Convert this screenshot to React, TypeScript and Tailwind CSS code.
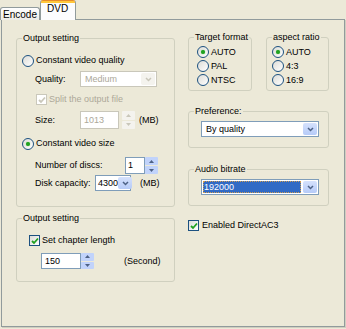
import React from "react";

const font = "font-['Liberation_Sans',Arial,sans-serif] text-[9px] leading-[11px] text-black";

function Radio({ checked }: { checked?: boolean }) {
  return (
    <span className="relative flex h-[12px] w-[12px] shrink-0 items-center justify-center rounded-full border border-[#1c5180] bg-gradient-to-br from-[#dcdcd7] to-white">
      {checked && <span className="h-[4px] w-[4px] rounded-full bg-[#21a121] shadow-[0_0_1px_#4fc94f]" />}
    </span>
  );
}

function Check({ checked, disabled }: { checked?: boolean; disabled?: boolean }) {
  return (
    <span
      className={
        disabled
          ? "flex h-[11px] w-[11px] shrink-0 items-center justify-center border border-[#cac8bb] bg-white"
          : "flex h-[11px] w-[11px] shrink-0 items-center justify-center border border-[#1c5180] bg-gradient-to-br from-[#dcdcd7] to-white"
      }
    >
      {checked && (
        <svg width="8" height="8" viewBox="0 0 8 8">
          <path d="M1 4 L3 6 L7 1.5" fill="none" stroke={disabled ? "#cac8bb" : "#21a121"} strokeWidth="1.8" />
        </svg>
      )}
    </span>
  );
}

function Spin({ disabled, h = 18 }: { disabled?: boolean; h?: number }) {
  const bg = disabled ? "bg-[#f4f3ee]" : "bg-[#c1d3fb]";
  const fill = disabled ? "#c9c7ba" : "#4d6185";
  return (
    <span className="flex w-[13px] shrink-0 flex-col gap-[1px]" style={{ height: h }}>
      <span className={`flex flex-1 items-center justify-center rounded-[1px] ${bg}`}>
        <svg width="5" height="3" viewBox="0 0 5 3">
          <path d="M0 3 L2.5 0 L5 3 Z" fill={fill} />
        </svg>
      </span>
      <span className={`flex flex-1 items-center justify-center rounded-[1px] ${bg}`}>
        <svg width="5" height="3" viewBox="0 0 5 3">
          <path d="M0 0 L2.5 3 L5 0 Z" fill={fill} />
        </svg>
      </span>
    </span>
  );
}

function DropBtn({ disabled }: { disabled?: boolean }) {
  return (
    <span
      className={
        disabled
          ? "flex h-full w-[14px] shrink-0 items-center justify-center rounded-[2px] bg-[#f4f3ee]"
          : "flex h-full w-[14px] shrink-0 items-center justify-center rounded-[2px] bg-gradient-to-b from-[#d5e1fc] to-[#b6cbf8]"
      }
    >
      <svg width="7" height="5" viewBox="0 0 7 5">
        <path d="M1 1 L3.5 3.5 L6 1" fill="none" stroke={disabled ? "#c9c7ba" : "#4d6185"} strokeWidth="1.5" />
      </svg>
    </span>
  );
}

function Group({ title, className, inner, children }: { title: string; className?: string; inner?: string; children: React.ReactNode }) {
  return (
    <fieldset className={`rounded-[3px] border border-[#d0d0bf] ${className ?? ""}`}>
      <legend className="ml-[5px] whitespace-nowrap px-[1px] text-[9px] leading-[11px]">{title}</legend>
      <div className={inner}>{children}</div>
    </fieldset>
  );
}

export default function App() {
  return (
    <div className={`flex h-[329px] w-[346px] flex-col bg-[#ece9d8] ${font}`}>
      {/* tabs */}
      <div className="relative z-10 flex h-[20px] items-end">
        <div className="flex h-[13px] w-[40px] items-center justify-center rounded-t-[3px] border border-b-0 border-[#919b9c] bg-gradient-to-b from-white to-[#ecebe6] pt-[1px] text-[10px]">
          Encode
        </div>
        <div className="flex h-[20px] w-[36px] flex-col rounded-t-[3px] border-x border-[#919b9c] bg-[#fcfcfe]">
          <div className="h-[3px] rounded-t-[2px] border-t border-[#e68b2c] bg-[#ffc83c]" />
          <div className="flex flex-1 items-start pl-[6px] text-[10px]">DVD</div>
        </div>
      </div>

      {/* panel */}
      <div className="-mt-px mx-[1px] mb-[2px] flex flex-1 border border-[#919b9c] pl-[14px] pt-[13px] shadow-[1px_1px_0_#d0cebf]">
        {/* left column */}
        <div className="flex w-[159px] flex-col">
          <Group title="Output setting" inner="pb-[15px] pl-[5px]">
            <div className="mt-[10px] flex h-[13px] items-center gap-[2px]">
              <Radio />
              <span>Constant video quality</span>
            </div>
            <div className="mt-[4px] flex h-[16px] items-center">
              <span className="w-[58px] pl-[13px]">Quality:</span>
              <div className="flex h-full w-[77px] items-center border border-[#c9c7ba] bg-white p-[1px]">
                <span className="flex-1 pl-[3px] text-[#aca899]">Medium</span>
                <DropBtn disabled />
              </div>
            </div>
            <div className="mt-[6px] flex h-[13px] items-center gap-[2px] pl-[14px] text-[#aca899]">
              <Check checked disabled />
              <span>Split the output file</span>
            </div>
            <div className="mt-[5px] flex h-[18px] items-center">
              <span className="w-[58px] pl-[13px]">Size:</span>
              <div className="flex h-full w-[39px] items-center border border-[#c9c7ba] bg-white pl-[3px] text-[#aca899]">1013</div>
              <span className="ml-[3px]"><Spin disabled h={18} /></span>
              <span className="ml-[4px]">(MB)</span>
            </div>
            <div className="mt-[8px] flex h-[13px] items-center gap-[2px]">
              <Radio checked />
              <span>Constant video size</span>
            </div>
            <div className="mt-[7px] flex h-[17px] items-center">
              <span className="w-[103px] pl-[13px]">Number of discs:</span>
              <div className="flex h-full w-[20px] items-center border border-[#7f9db9] bg-white pl-[2px]">1</div>
              <Spin h={17} />
            </div>
            <div className="mt-[1px] flex h-[16px] items-center">
              <span className="w-[73px] pl-[13px]">Disk capacity:</span>
              <div className="flex h-full w-[36px] items-center border border-[#7f9db9] bg-white p-[1px]">
                <span className="flex-1 pl-[1px]">4300</span>
                <DropBtn />
              </div>
              <span className="ml-[9px]">(MB)</span>
            </div>
          </Group>

          <Group title="Output setting" className="mt-[6px]" inner="pb-[12px] pl-[12px]">
            <div className="mt-[10px] flex h-[13px] items-center gap-[2px]">
              <Check checked />
              <span>Set chapter length</span>
            </div>
            <div className="mt-[6px] flex h-[16px] items-center pl-[12px]">
              <div className="flex h-full w-[40px] items-center border border-[#7f9db9] bg-white pl-[3px]">150</div>
              <Spin h={16} />
              <span className="ml-[30px]">(Second)</span>
            </div>
          </Group>
        </div>

        {/* right column */}
        <div className="ml-[13px] flex w-[141px] flex-col">
          <div className="-mt-px flex justify-between">
            <Group title="Target format" className="w-[64px]" inner="pb-[3px] pl-[8px]">
              <div className="mt-[2px] flex flex-col">
                {["AUTO", "PAL", "NTSC"].map((t, i) => (
                  <div key={t} className="flex h-[14px] items-center gap-[2px]">
                    <Radio checked={i === 0} />
                    <span>{t}</span>
                  </div>
                ))}
              </div>
            </Group>
            <Group title="aspect ratio" className="w-[63px]" inner="pb-[3px] pl-[5px]">
              <div className="mt-[2px] flex flex-col">
                {["AUTO", "4:3", "16:9"].map((t, i) => (
                  <div key={t} className="flex h-[14px] items-center gap-[2px]">
                    <Radio checked={i === 0} />
                    <span>{t}</span>
                  </div>
                ))}
              </div>
            </Group>
          </div>

          <Group title="Preference:" className="mt-[15px]" inner="pb-[10px] pl-[12px]">
            <div className="mt-[4px] flex h-[16px] w-[118px] items-center border border-[#7f9db9] bg-white p-[1px]">
              <span className="flex-1 pl-[3px]">By quality</span>
              <DropBtn />
            </div>
          </Group>

          <Group title="Audio bitrate" className="mt-[16px]" inner="pb-[10px] pl-[12px]">
            <div className="mt-[4px] flex h-[16px] w-[118px] items-center border border-[#7f9db9] bg-white p-[1px]">
              <span className="h-full flex-1 pr-[2px]">
                <span className="flex h-full w-full items-center bg-[#316ac5] pl-[1px] text-white outline outline-1 outline-dotted outline-[#ce9c52] -outline-offset-1">192000</span>
              </span>
              <DropBtn />
            </div>
          </Group>

          <div className="mt-[13px] flex h-[13px] items-center gap-[3px]">
            <Check checked />
            <span>Enabled DirectAC3</span>
          </div>
        </div>
      </div>
    </div>
  );
}
